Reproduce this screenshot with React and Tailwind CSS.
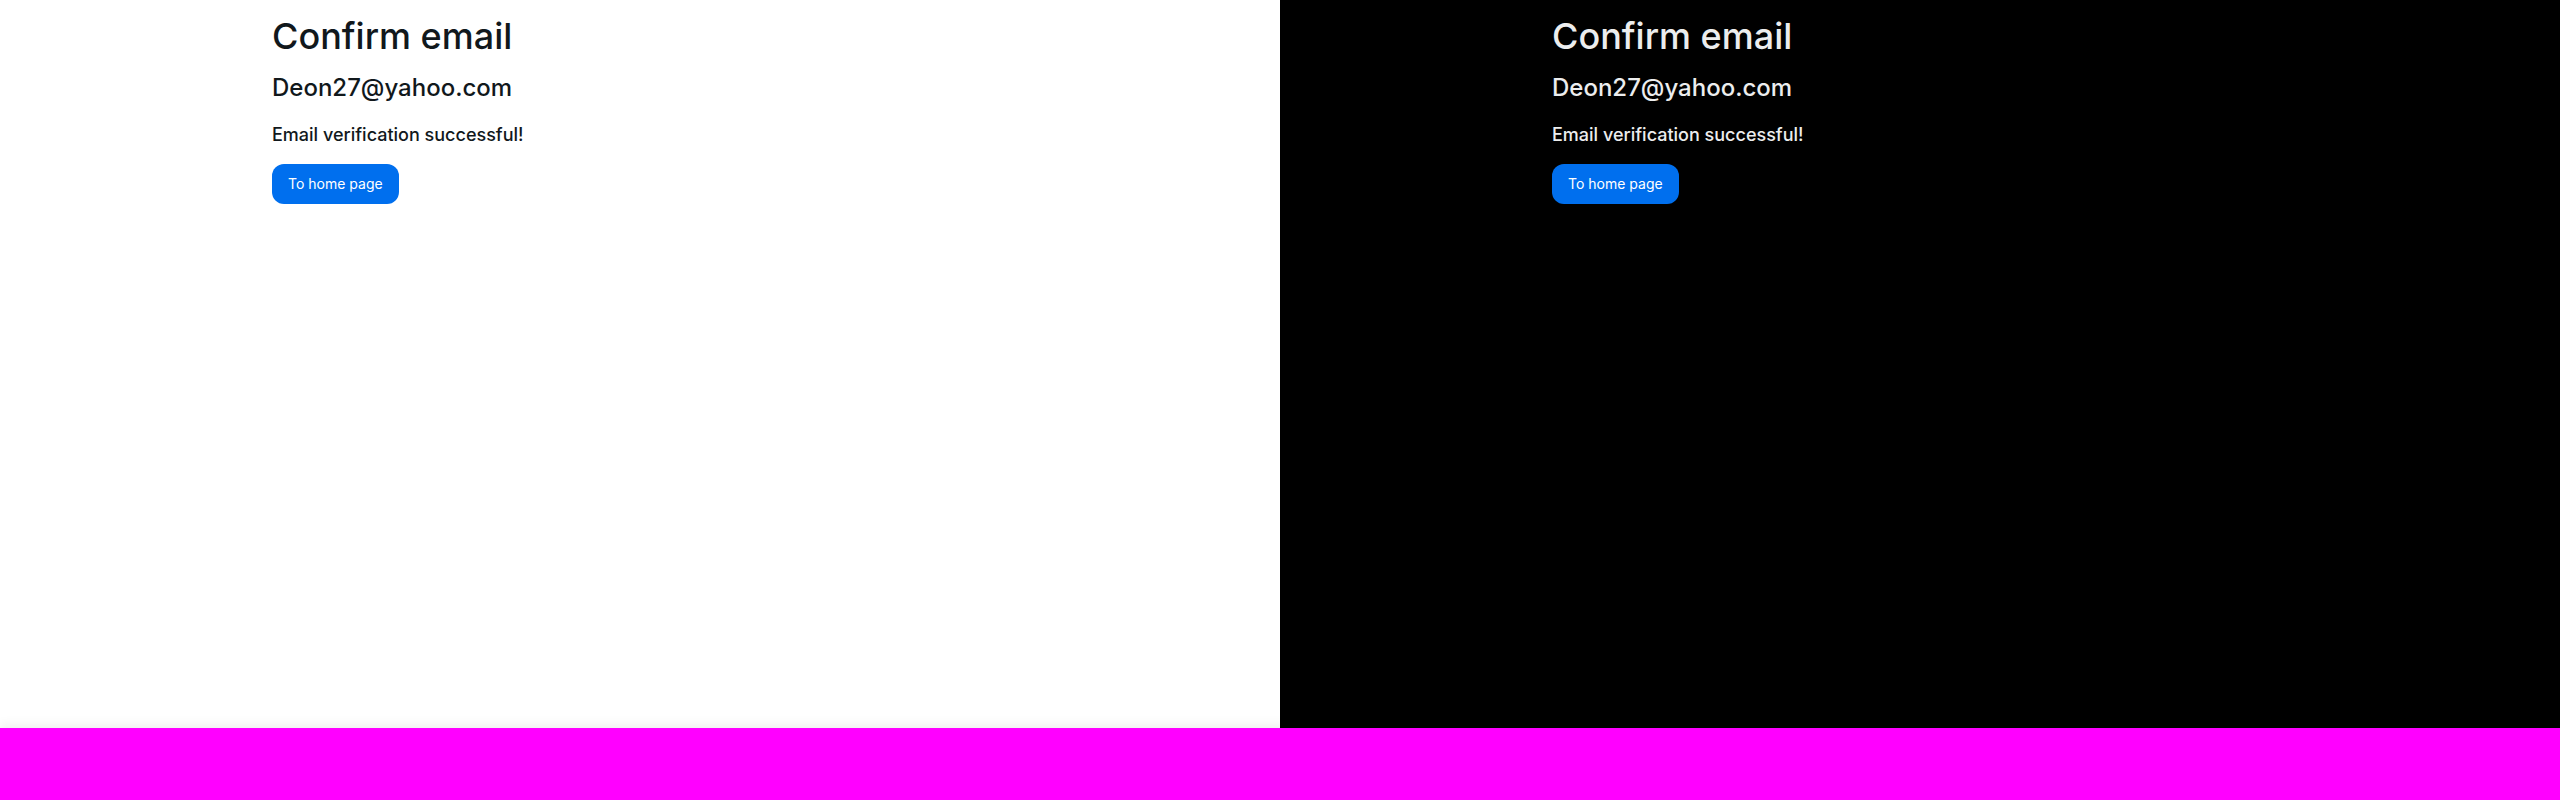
import React from "react";

function Panel({ dark }) {
  return (
    <div
      className={
        dark
          ? "flex-1 h-full pl-[272px] pt-4 flex flex-col items-start gap-4 bg-black text-[#ECEDEE]"
          : "flex-1 h-full pl-[272px] pt-4 flex flex-col items-start gap-4 bg-white text-[#11181C]"
      }
    >
      <h1 className="text-4xl font-medium">Confirm email</h1>
      <h2 className="text-2xl font-medium">Deon27@yahoo.com</h2>
      <p className="text-lg font-medium pt-px">Email verification successful!</p>
      <button className="h-10 px-4 -mt-px rounded-xl bg-[#006FEE] text-white text-sm">
        To home page
      </button>
    </div>
  );
}

export default function App() {
  return (
    <div className="w-[2560px] h-[800px] flex flex-col font-[Inter,sans-serif]">
      <div className="flex h-[728px]">
        <Panel />
        <Panel dark />
      </div>
      <div className="h-[72px] bg-[#FF00FF] relative shadow-[0_-4px_10px_rgba(0,0,0,0.06)]" />
    </div>
  );
}
